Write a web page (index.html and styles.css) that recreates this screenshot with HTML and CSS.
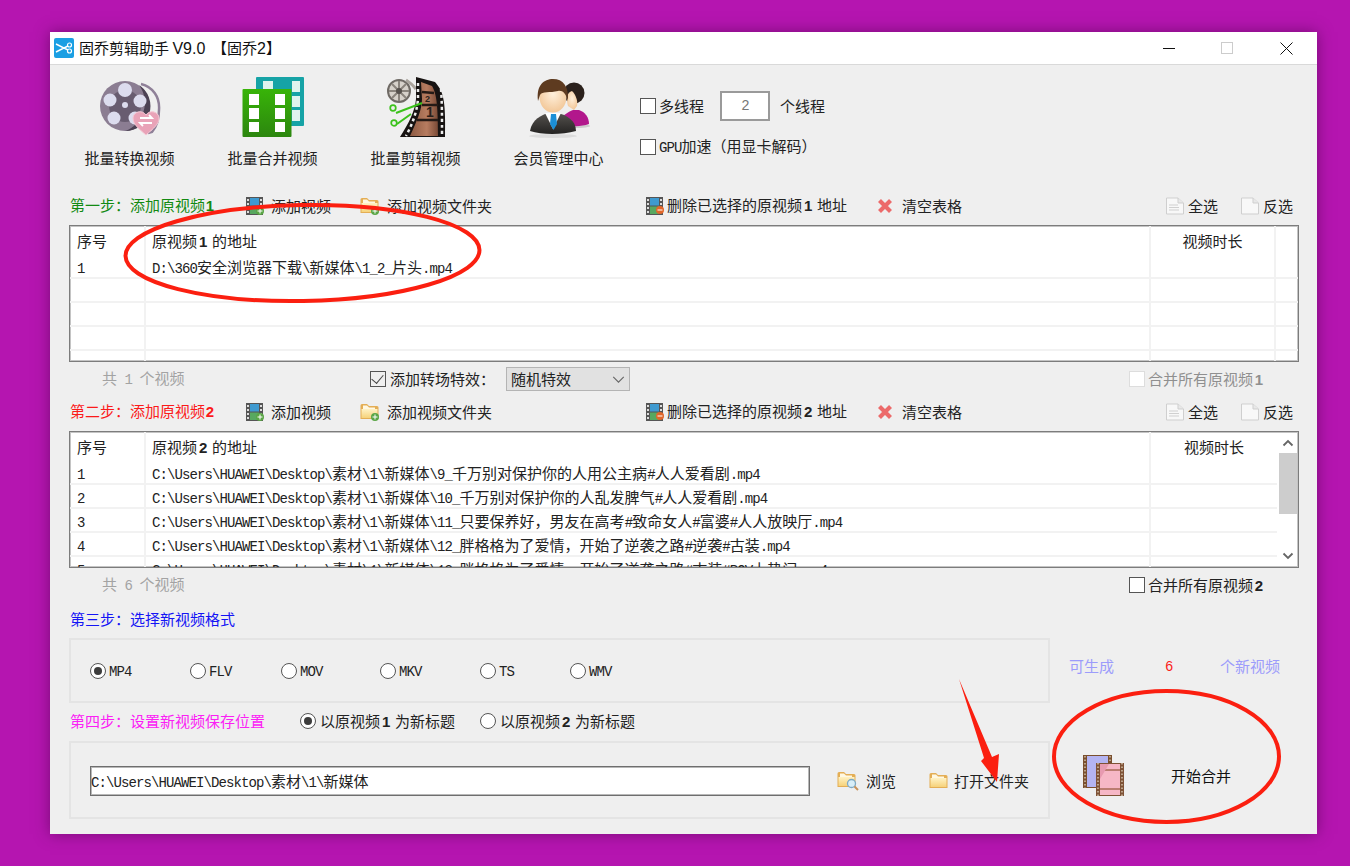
FILE: index.html
```html
<!DOCTYPE html>
<html lang="zh-CN">
<head>
<meta charset="utf-8">
<title>固乔剪辑助手 V9.0</title>
<link rel="stylesheet" href="styles.css">
</head>
<body>
<svg class="defs" width="0" height="0">
  <defs>
    <linearGradient id="gfront" x1="0" y1="0" x2="0" y2="1"><stop offset="0" stop-color="#38b408"/><stop offset="1" stop-color="#2c860f"/></linearGradient>
    <linearGradient id="gfolder" x1="0" y1="0" x2="0" y2="1"><stop offset="0" stop-color="#fff2c4"/><stop offset="1" stop-color="#f6d27a"/></linearGradient>
    <linearGradient id="gfilm" x1="0" y1="0" x2="1" y2="0"><stop offset="0" stop-color="#8d5a42"/><stop offset=".6" stop-color="#b77c60"/><stop offset="1" stop-color="#7a4a36"/></linearGradient>
    <radialGradient id="gface" cx=".5" cy=".4" r=".7"><stop offset="0" stop-color="#fff0dc"/><stop offset="1" stop-color="#f0c08c"/></radialGradient>
    <linearGradient id="gsuit" x1="0" y1="0" x2="0" y2="1"><stop offset="0" stop-color="#55524e"/><stop offset="1" stop-color="#242322"/></linearGradient>
    <symbol id="film" viewBox="0 0 18 18">
      <rect x="0" y="0" width="17" height="18" fill="#555"/>
      <rect x="4" y="1" width="9" height="7.500" fill="#3f9ad0"/>
      <rect x="4" y="9.500" width="9" height="7.500" fill="#58a860"/>
      <path d="M1 2h2v2H1zM1 6h2v2H1zM1 10h2v2H1zM1 14h2v2H1zM14 2h2v2h-2zM14 6h2v2h-2zM14 10h2v2h-2zM14 14h2v2h-2z" fill="#ddd"/>
    </symbol>
    <symbol id="folder" viewBox="0 0 20 18">
      <path d="M0.500 2.500 Q0.500 1 2 1 H7 L9 3 H17 Q18.500 3 18.500 4.500 V16 H0.500Z" fill="#e4ae55"/>
      <path d="M1.500 6 H17.500 V15 H1.500Z" fill="url(#gfolder)"/>
      <path d="M3 2.500 H7 L9 4.500 H15 V6 H3Z" fill="#fff8e2"/>
    </symbol>
    <symbol id="doc" viewBox="0 0 20 18">
      <path d="M1.500 1 H13 L18.500 6 V17 H1.500Z" fill="#f8f8f8" stroke="#cfcfcf"/>
      <path d="M13 1 V6 H18.500" fill="#e8e8e8" stroke="#cfcfcf"/>
    </symbol>
  </defs>
</svg>

<main class="window">
  <header class="titlebar">
    <svg class="appicon" viewBox="0 0 20 20"><rect width="20" height="20" rx="2" fill="#1b9fe3"/><path d="M2 6 L10 10 L2 14 M10 10 L14 8 M10 10 L14 12" fill="none" stroke="#fff" stroke-width="1.400"/><circle cx="15.500" cy="7" r="2" fill="none" stroke="#fff" stroke-width="1.200"/><circle cx="15.500" cy="13" r="2" fill="none" stroke="#fff" stroke-width="1.200"/></svg>
    <span class="title">固乔剪辑助手 <span class="ver">V9.0</span> &nbsp;【固乔<span class="ver">2</span>】</span>
    <div class="controls">
      <span class="min"></span>
      <span class="max"></span>
      <svg class="close" viewBox="0 0 13 13"><path d="M0.500 0.500 L12.500 12.500 M12.500 0.500 L0.500 12.500" stroke="#111" stroke-width="1" fill="none"/></svg>
    </div>
  </header>

  <section class="toolbar">
    <div class="tool">
      <svg class="toolicon" viewBox="0 0 62 62">
        <path d="M42 7 C54 10 61 20 60 33 C60 42 58 49 53 55 L49 56" fill="none" stroke="#8f8098" stroke-width="2.500"/>
        <circle cx="26" cy="29" r="25" fill="#8b7d92"/>
        <path d="M40 8 A25 25 0 0 1 26 54 A30 30 0 0 0 40 8Z" fill="#4c4254"/>
        <circle cx="26" cy="29" r="16" fill="#3f3646" opacity=".45"/>
        <circle cx="26" cy="13" r="7" fill="#dcdcee"/><circle cx="11" cy="23" r="6.500" fill="#dcdcee"/><circle cx="41" cy="24" r="6.500" fill="#dcdcee"/><circle cx="15" cy="41" r="6.500" fill="#dcdcee"/><circle cx="36" cy="41" r="6.500" fill="#dcdcee"/><circle cx="26" cy="28" r="3" fill="#dcdcee"/>
        <path d="M47 58 C39 51 34 47 34 41 C34 35 43 32 47 38 C51 32 60 35 60 41 C60 47 55 51 47 58Z" fill="#e9a3b8" stroke="#f4c8d4"/>
        <path d="M41 41 H53 L50 38 M53 46 H41 L44 49" fill="none" stroke="#fff" stroke-width="1.800"/>
      </svg>
      <span>批量转换视频</span>
    </div>
    <div class="tool">
      <svg class="toolicon" viewBox="0 0 62 62">
        <rect x="14" y="0" width="48" height="49" rx="1" fill="#16a3a6"/>
        <path d="M21 4h10v8H21zM50 4h8v11h-8zM50 19h8v11h-8zM50 33h8v11h-8z" fill="#dff3ee"/>
        <rect x="0.500" y="12" width="49" height="48" rx="1" fill="url(#gfront)"/>
        <path d="M7 17h10v11H7zM33 17h10v11H33zM7 31h10v11H7zM33 31h10v11H33zM7 45h10v10H7zM33 45h10v10H33z" fill="#fff"/>
      </svg>
      <span>批量合并视频</span>
    </div>
    <div class="tool">
      <svg class="toolicon" viewBox="0 0 62 62">
        <circle cx="14" cy="14" r="11" fill="#d6d1ca" stroke="#6f6a65" stroke-width="2"/>
        <path d="M14 4v20M4 14h20M7 7l14 14M21 7L7 21" stroke="#8a847d" stroke-width="2"/>
        <circle cx="14" cy="14" r="3" fill="#55504c"/>
        <path d="M21 3 C24 5 28 8 31 12" fill="none" stroke="#aaa49d" stroke-width="3"/>
        <path d="M31 0 L50 5 C58 14 61 22 60 60 H15 C24 46 30 34 31 22Z" fill="#171312"/>
        <path d="M36 5 L47 9 C51 16 53 24 53 59 H25 C32 44 37 32 37 22Z" fill="url(#gfilm)"/>
        <path d="M37 15 L49 16 M37 28 L53 28 M32 43 L53 43" stroke="#241a16" stroke-width="2.500" fill="none"/>
        <path d="M56 12 C57 24 57 40 57 59" fill="none" stroke="#eee" stroke-width="2.500" stroke-dasharray="3 3"/>
        <path d="M33 6 L33 22 C32 34 28 46 21 59" fill="none" stroke="#eee" stroke-width="2.500" stroke-dasharray="3 3"/>
        <text x="40" y="25" class="filmnum">2</text>
        <text x="41" y="40" class="filmnum big">1</text>
        <path d="M11 36 L37 26 M12 47 L26 37" stroke="#3cc21c" stroke-width="2" fill="none"/>
        <circle cx="8" cy="31" r="2.800" fill="#eee" stroke="#3cc21c" stroke-width="1.700"/>
        <circle cx="9" cy="46" r="2.800" fill="#eee" stroke="#3cc21c" stroke-width="1.700"/>
      </svg>
      <span>批量剪辑视频</span>
    </div>
    <div class="tool">
      <svg class="toolicon" viewBox="0 0 62 62">
        <ellipse cx="47" cy="49" rx="15" ry="2" fill="#ccc"/>
        <path d="M32 46 C34 38 40 35 45 33 H51 C57 35 61 40 61 47 C52 50 42 50 32 46Z" fill="#b2178c"/>
        <circle cx="46" cy="16" r="10.500" fill="#2b211c"/>
        <path d="M40 29 C38 22 39 15 44 14 C48 18 50 24 49 29 L46 33Z" fill="url(#gface)"/>
        <path d="M2 54 C4 42 14 38 20 36 H30 C38 38 48 43 48 54 C34 58 14 58 2 54Z" fill="url(#gsuit)"/>
        <path d="M17 36 H33 L25 52Z" fill="#fff"/>
        <path d="M23 37 H28 L29 47 L25.500 53 L22 47Z" fill="#1c8fd6"/>
        <ellipse cx="25" cy="59" rx="24" ry="2" fill="#dcdcdc"/>
        <ellipse cx="25" cy="20" rx="13.500" ry="15.500" fill="url(#gface)"/>
        <path d="M10 24 C8 8 16 2 25 2 C35 2 41 9 40 24 C38 16 34 13 30 14 C22 16 14 14 12 18Z" fill="#5e3b20"/>
      </svg>
      <span>会员管理中心</span>
    </div>
    <div class="options">
      <div class="opt">
        <span class="cb"></span><span>多线程</span>
        <span class="threads"><span class="m">2</span></span>
        <span>个线程</span>
      </div>
      <div class="opt">
        <span class="cb"></span><span><span class="m">GPU</span>加速（用显卡解码）</span>
      </div>
    </div>
  </section>

  <div class="actions">
    <span class="step green">第一步：添加原视频<b class="d">1</b></span>
    <span class="act"><svg class="ic"><use href="#film"/></svg><svg class="badge" viewBox="0 0 8 8"><circle cx="4" cy="4" r="4" fill="#5aa646"/><path d="M4 1.500V6.500M1.500 4H6.500" stroke="#fff"/></svg><span class="t8">添加视频</span></span>
    <span class="act"><svg class="ic fold"><use href="#folder"/></svg><svg class="badge b2" viewBox="0 0 8 8"><circle cx="4" cy="4" r="4" fill="#5aa646"/><path d="M4 1.500V6.500M1.500 4H6.500" stroke="#fff"/></svg><span class="t8">添加视频文件夹</span></span>
    <span class="act"><svg class="ic"><use href="#film"/></svg><svg class="badge" viewBox="0 0 8 8"><circle cx="4" cy="4" r="4" fill="#e2672a"/><path d="M1.500 4H6.500" stroke="#fff"/></svg><span class="t3">删除已选择的原视频<b class="ds">1</b> 地址</span></span>
    <span class="act"><svg class="ic x" viewBox="0 0 16 16"><path d="M2.500 2.500 L13.500 13.500 M13.500 2.500 L2.500 13.500" stroke="#ec6a6a" stroke-width="4.200" fill="none"/></svg><span class="t9">清空表格</span></span>
    <span class="act"><svg class="ic doc"><use href="#doc"/><path d="M4 8H13M4 10.500H14M4 13H14" stroke="#d0d0d0"/></svg><span class="t3">全选</span></span>
    <span class="act"><svg class="ic doc"><use href="#doc"/></svg><span class="t3">反选</span></span>
  </div>

  <section class="tbl tbl1">
    <div class="tbody">
      <div class="row head"><span class="c1">序号</span><span class="c2">原视频<b class="ds">1</b> 的地址</span><span class="c3">视频时长</span><span class="c4"></span></div>
      <div class="row"><span class="c1"><span class="m">1</span></span><span class="c2"><span class="m">D:\360</span>安全浏览器下载<span class="m">\</span>新媒体<span class="m">\1_2_</span>片头<span class="m">.mp4</span></span><span class="c3"></span><span class="c4"></span></div>
      <div class="row"><span class="c1"></span><span class="c2"></span><span class="c3"></span><span class="c4"></span></div>
      <div class="row"><span class="c1"></span><span class="c2"></span><span class="c3"></span><span class="c4"></span></div>
      <div class="row"><span class="c1"></span><span class="c2"></span><span class="c3"></span><span class="c4"></span></div>
      <div class="row"><span class="c1"></span><span class="c2"></span><span class="c3"></span><span class="c4"></span></div>
    </div>
  </section>

  <div class="meta">
    <span class="count">共<span class="m"> 1 </span>个视频</span>
    <span class="fx"><span class="cb on"></span><span>添加转场特效：</span></span>
    <span class="select"><span>随机特效</span><svg class="chev" viewBox="0 0 14 8"><path d="M1 1 L7 7 L13 1" fill="none" stroke="#666" stroke-width="1.300"/></svg></span>
    <span class="merge off"><span class="cb"></span><span>合并所有原视频<b class="d1">1</b></span></span>
  </div>

  <div class="actions second">
    <span class="step red">第二步：添加原视频<b class="d">2</b></span>
    <span class="act"><svg class="ic"><use href="#film"/></svg><svg class="badge" viewBox="0 0 8 8"><circle cx="4" cy="4" r="4" fill="#5aa646"/><path d="M4 1.500V6.500M1.500 4H6.500" stroke="#fff"/></svg><span class="t8">添加视频</span></span>
    <span class="act"><svg class="ic fold"><use href="#folder"/></svg><svg class="badge b2" viewBox="0 0 8 8"><circle cx="4" cy="4" r="4" fill="#5aa646"/><path d="M4 1.500V6.500M1.500 4H6.500" stroke="#fff"/></svg><span class="t8">添加视频文件夹</span></span>
    <span class="act"><svg class="ic"><use href="#film"/></svg><svg class="badge" viewBox="0 0 8 8"><circle cx="4" cy="4" r="4" fill="#e2672a"/><path d="M1.500 4H6.500" stroke="#fff"/></svg><span class="t3">删除已选择的原视频<b class="ds">2</b> 地址</span></span>
    <span class="act"><svg class="ic x" viewBox="0 0 16 16"><path d="M2.500 2.500 L13.500 13.500 M13.500 2.500 L2.500 13.500" stroke="#ec6a6a" stroke-width="4.200" fill="none"/></svg><span class="t9">清空表格</span></span>
    <span class="act"><svg class="ic doc"><use href="#doc"/><path d="M4 8H13M4 10.500H14M4 13H14" stroke="#d0d0d0"/></svg><span class="t3">全选</span></span>
    <span class="act"><svg class="ic doc"><use href="#doc"/></svg><span class="t3">反选</span></span>
  </div>

  <section class="tbl tbl2">
    <div class="tbody">
      <div class="row head"><span class="c1">序号</span><span class="c2">原视频<b class="ds">2</b> 的地址</span><span class="c3">视频时长</span></div>
      <div class="row"><span class="c1"><span class="m">1</span></span><span class="c2"><span class="m">C:\Users\HUAWEI\Desktop\</span>素材<span class="m">\1\</span>新媒体<span class="m">\9_</span>千万别对保护你的人用公主病<span class="m">#</span>人人爱看剧<span class="m">.mp4</span></span><span class="c3"></span></div>
      <div class="row"><span class="c1"><span class="m">2</span></span><span class="c2"><span class="m">C:\Users\HUAWEI\Desktop\</span>素材<span class="m">\1\</span>新媒体<span class="m">\10_</span>千万别对保护你的人乱发脾气<span class="m">#</span>人人爱看剧<span class="m">.mp4</span></span><span class="c3"></span></div>
      <div class="row"><span class="c1"><span class="m">3</span></span><span class="c2"><span class="m">C:\Users\HUAWEI\Desktop\</span>素材<span class="m">\1\</span>新媒体<span class="m">\11_</span>只要保养好，男友在高考<span class="m">#</span>致命女人<span class="m">#</span>富婆<span class="m">#</span>人人放映厅<span class="m">.mp4</span></span><span class="c3"></span></div>
      <div class="row"><span class="c1"><span class="m">4</span></span><span class="c2"><span class="m">C:\Users\HUAWEI\Desktop\</span>素材<span class="m">\1\</span>新媒体<span class="m">\12_</span>胖格格为了爱情，开始了逆袭之路<span class="m">#</span>逆袭<span class="m">#</span>古装<span class="m">.mp4</span></span><span class="c3"></span></div>
      <div class="row"><span class="c1"><span class="m">5</span></span><span class="c2"><span class="m">C:\Users\HUAWEI\Desktop\</span>素材<span class="m">\1\</span>新媒体<span class="m">\13_</span>胖格格为了爱情，开始了逆袭之路<span class="m">#</span>古装<span class="m">#POV</span>上热门<span class="m">.mp4</span></span><span class="c3"></span></div>
    </div>
    <div class="scroll">
      <svg class="arrow" viewBox="0 0 12 8"><path d="M1.500 6.500 L6 2 L10.500 6.500" fill="none" stroke="#666" stroke-width="1.800"/></svg>
      <span class="thumb"></span>
      <svg class="arrow" viewBox="0 0 12 8"><path d="M1.500 1.500 L6 6 L10.500 1.500" fill="none" stroke="#666" stroke-width="1.800"/></svg>
    </div>
  </section>

  <div class="meta">
    <span class="count">共<span class="m"> 6 </span>个视频</span>
    <span class="merge"><span class="cb"></span><span>合并所有原视频<b class="d1">2</b></span></span>
  </div>

  <div class="bottom">
    <div class="leftcol">
      <div class="steprow"><span class="step blue">第三步：选择新视频格式</span></div>
      <div class="group formats">
        <span class="fmt"><span class="radio on"></span><span class="m">MP4</span></span>
        <span class="fmt"><span class="radio"></span><span class="m">FLV</span></span>
        <span class="fmt"><span class="radio"></span><span class="m">MOV</span></span>
        <span class="fmt"><span class="radio"></span><span class="m">MKV</span></span>
        <span class="fmt"><span class="radio"></span><span class="m">TS</span></span>
        <span class="fmt"><span class="radio"></span><span class="m">WMV</span></span>
      </div>
      <div class="steprow four">
        <span class="step magenta">第四步：设置新视频保存位置</span>
        <span class="fmt titlechoice"><span class="radio on"></span><span>以原视频<b class="ds">1</b> 为新标题</span></span>
        <span class="fmt titlechoice"><span class="radio"></span><span>以原视频<b class="ds">2</b> 为新标题</span></span>
      </div>
      <div class="group savebox">
        <div class="path"><span class="m">C:\Users\HUAWEI\Desktop\</span>素材<span class="m">\1\</span>新媒体</div>
        <span class="act browse"><svg class="ic2" viewBox="0 0 22 20"><use href="#folder" width="20" height="18"/><circle cx="14.500" cy="12.500" r="4" fill="#d8eef8" stroke="#7fa9c4" stroke-width="1.300"/><path d="M17.500 15.500 L21 19" stroke="#c8925a" stroke-width="2"/></svg><span>浏览</span></span>
        <span class="act open"><svg class="ic3" viewBox="0 0 20 18"><use href="#folder"/></svg><span>打开文件夹</span></span>
      </div>
    </div>
    <div class="rightcol">
      <div class="gen"><span>可生成</span><span class="num"><span class="m">6</span></span><span>个新视频</span></div>
      <div class="start">
        <svg class="starticon" viewBox="0 0 41 41">
          <rect x="0" y="0" width="29" height="33" fill="#7a4f2e"/>
          <rect x="4" y="1" width="21" height="31" fill="#b4b4f2"/>
          <path d="M2 1V33M27 1V33" stroke="#d8c8b0" stroke-width="1.400" stroke-dasharray="1.500 2"/>
          <rect x="13" y="8" width="28" height="33" fill="#7f5236"/>
          <rect x="17" y="9" width="20" height="31" fill="#f6b7c6"/>
          <path d="M17 15H37M17 34H37" stroke="#a86a56" stroke-width="1.400"/>
          <path d="M17 9 L26 9 L17 24Z" fill="#e79ab0"/>
          <path d="M15 8V41M39 8V41" stroke="#d8c8b0" stroke-width="1.400" stroke-dasharray="1.500 2"/>
        </svg>
        <span class="starttext">开始合并</span>
      </div>
    </div>
  </div>
</main>

<svg class="annot" viewBox="0 0 1350 866">
  <ellipse cx="302.500" cy="253" rx="177" ry="48" transform="rotate(-1 302.500 253)" class="ring"/>
  <ellipse cx="1166.500" cy="756.500" rx="112.500" ry="65.500" class="ring"/>
  <path d="M959 679 L992 757 L999 754 L997 782 L981 761 L984 758Z" fill="#fb1f10"/>
</svg>
</body>
</html>
```
FILE: styles.css
```css
* { box-sizing: border-box; }
html, body { margin: 0; padding: 0; }
body {
  width: 1350px;
  height: 866px;
  padding: 32px 33px 32px 50px;
  background: #b515b0;
  overflow: hidden;
  font-family: "Noto Sans CJK SC", "Noto Sans", sans-serif;
  font-size: 15px;
  line-height: 20px;
  color: #222;
}
.defs { position: absolute; }
.annot { position: absolute; left: 0; top: 0; width: 1350px; height: 866px; pointer-events: none; }
.ring { fill: none; stroke: #fb1f10; stroke-width: 4; }

.m { font-family: "Liberation Mono", monospace; font-size: 14px; letter-spacing: -0.900px; white-space: pre; }
b { font-family: "Liberation Sans", sans-serif; font-size: 15px; font-weight: 700; display: inline-block; }
.d { width: 9px; text-align: right; }
.d1 { width: 10px; text-align: right; }
.ds { width: 11.600px; padding-left: 2px; }

.window {
  width: 1267px;
  height: 802px;
  background: #efefef;
  box-shadow: 0 0 14px rgba(60, 0, 60, .5);
}
.titlebar {
  height: 33px;
  background: #fff;
  border-bottom: 1px solid #d9d9d9;
  display: flex;
  align-items: center;
  padding-left: 4px;
  font-size: 15px;
}
.appicon { width: 20px; height: 20px; margin-right: 5px; }
.title { color: #111; white-space: pre; }
.ver { font-family: "Liberation Sans", sans-serif; font-size: 16px; }
.controls { margin-left: auto; display: flex; align-items: center; padding-right: 24px; }
.min { width: 12px; height: 1px; background: #111; }
.max { width: 12px; height: 12px; border: 1px solid #ccc; margin-left: 46px; }
.close { width: 13px; height: 13px; margin-left: 47px; }

.toolbar { height: 128px; display: flex; padding-left: 8px; }
.tool { width: 143px; padding-top: 12px; display: flex; flex-direction: column; align-items: center; }
.toolicon { width: 62px; height: 62px; display: block; }
.tool > span { margin-top: 9px; }
.filmnum { font-family: "Liberation Sans", sans-serif; font-size: 9px; font-weight: 700; fill: #2a1f1a; }
.filmnum.big { font-size: 14px; }
.options { margin-left: 10px; padding-top: 26px; display: flex; flex-direction: column; gap: 11px; }
.opt { display: flex; align-items: center; gap: 3px; height: 30px; }
.threads {
  width: 50px; height: 30px; margin: 0 7px 0 13px;
  display: flex; align-items: center; justify-content: center;
  background: #fff; border: 2px solid #9a9a9a; color: #777;
}

.cb { width: 16px; height: 16px; flex: none; display: inline-block; background: #fff; border: 1.500px solid #555; position: relative; }
.cb.on { background: transparent; }
.cb.on::after {
  content: ""; position: absolute; left: 3px; top: 0;
  width: 6px; height: 10px;
  border: solid #444; border-width: 0 1.500px 1.500px 0;
  transform: rotate(40deg);
}
.radio { width: 16px; height: 16px; flex: none; display: inline-block; border-radius: 50%; background: #fff; border: 1.500px solid #555; position: relative; }
.radio.on::after { content: ""; position: absolute; left: 2.500px; top: 2.500px; width: 8px; height: 8px; border-radius: 50%; background: #3c3c3c; }

.actions {
  height: 25px;
  margin-bottom: 7px;
  padding-left: 20px;
  display: grid;
  grid-template-columns: 176px 114px 286px 231px 288px 75px 1fr;
  align-items: center;
}
.actions.second { margin-top: 3px; }
.step { white-space: nowrap; }
.green { color: #128a12; }
.red { color: #fb1a1a; }
.blue { color: #1414f5; }
.magenta { color: #fb20f5; }
.act { display: flex; align-items: center; position: relative; white-space: nowrap; }
.ic { width: 18px; height: 18px; flex: none; }
.ic.fold { width: 20px; }
.ic.x { width: 16px; height: 16px; }
.ic.doc { width: 20px; height: 18px; }
.badge { width: 8px; height: 8px; position: absolute; left: 10px; top: 11px; }
.badge.b2 { left: 11px; }
.t3 { margin-left: 3px; }
.t8 { margin-left: 7px; }
.t9 { margin-left: 9px; }

.tbl {
  height: 137px;
  margin-left: 19px;
  width: 1230px;
  background: #fff;
  border: 1px solid #7c7c7c;
  box-shadow: inset 0 0 0 1px #c4c4c4;
  display: flex;
  overflow: hidden;
}
.tbody { flex: 1; min-width: 0; }
.row { display: grid; grid-template-columns: 76px 1005px 125px 1fr; height: 24px; border-bottom: 2px solid #f2f2f2; line-height: 23px; }
.row.head { height: 29px; border-bottom: none; line-height: 30px; }
.row > span { border-right: 2px solid #f2f2f2; white-space: nowrap; overflow: hidden; }
.row > span:last-child { border-right: none; }
.c1 { padding-left: 7px; }
.c2 { padding-left: 6px; }
.c3 { text-align: center; }
.tbl2 .row { grid-template-columns: 76px 1005px 126px; }
.scroll { width: 21px; flex: none; display: flex; flex-direction: column; align-items: center; padding-top: 7px; }
.arrow { width: 12px; height: 8px; flex: none; }
.thumb { width: 18px; height: 61px; background: #cdcdcd; margin: 6px 0 38px; flex: none; }

.meta { height: 34px; margin-left: 19px; width: 1230px; padding-left: 33px; display: flex; align-items: center; }
.count { width: 268px; flex: none; color: #a3a3a3; }
.fx { width: 136px; flex: none; display: flex; align-items: center; gap: 4px; white-space: nowrap; }
.select {
  width: 124px; height: 24px; flex: none;
  display: flex; align-items: center; justify-content: space-between;
  padding: 0 4px;
  background: #e1e1e1; border: 1px solid #b4b4b4;
}
.chev { width: 13px; height: 7px; }
.merge { margin-left: auto; width: 170px; flex: none; display: flex; align-items: center; gap: 3px; white-space: nowrap; }
.merge.off { color: #8f8f8f; }
.merge.off .cb { border-color: #ddd; }

.bottom { display: flex; margin-left: 19px; margin-top: 4px; }
.leftcol { width: 981px; flex: none; }
.steprow { height: 32px; padding: 0 0 6px 1px; display: flex; align-items: center; }
.steprow.four { height: 38px; padding-bottom: 2px; }
.four .step { width: 230px; flex: none; }
.group { border: 2px solid #e4e4e4; }
.formats {
  height: 65px;
  padding: 1px 0 0 19px;
  display: grid;
  grid-template-columns: 100px 91px 99px 100px 90px 1fr;
  align-items: center;
}
.fmt { display: flex; align-items: center; gap: 3px; white-space: nowrap; }
.formats .m { padding-top: 2px; }
.titlechoice { width: 180px; flex: none; gap: 4px; }
.savebox { height: 78px; padding: 2px 0 0 19px; display: flex; align-items: center; }
.path {
  width: 720px; height: 30px; flex: none;
  background: #fff; border: 1px solid #6e6e6e;
  box-shadow: inset 0 0 0 1px #b8b8b8;
  line-height: 28px; white-space: nowrap;
}
.browse { margin-left: 27px; gap: 7px; width: 92px; flex: none; }
.ic2 { width: 22px; height: 20px; }
.open { gap: 5px; flex: none; }
.ic3 { width: 20px; height: 18px; }

.rightcol { flex: 1; padding-top: 48px; }
.gen { height: 24px; margin-left: 19px; display: grid; grid-template-columns: 96px 55px auto; align-items: center; color: #9c9cfb; justify-content: start; }
.num { color: #fb1a1a; }
.start { margin-top: 77px; padding-left: 33px; display: flex; align-items: center; }
.starticon { width: 41px; height: 41px; flex: none; }
.starttext { margin-left: 47px; color: #111; font-size: 15px; }
```
